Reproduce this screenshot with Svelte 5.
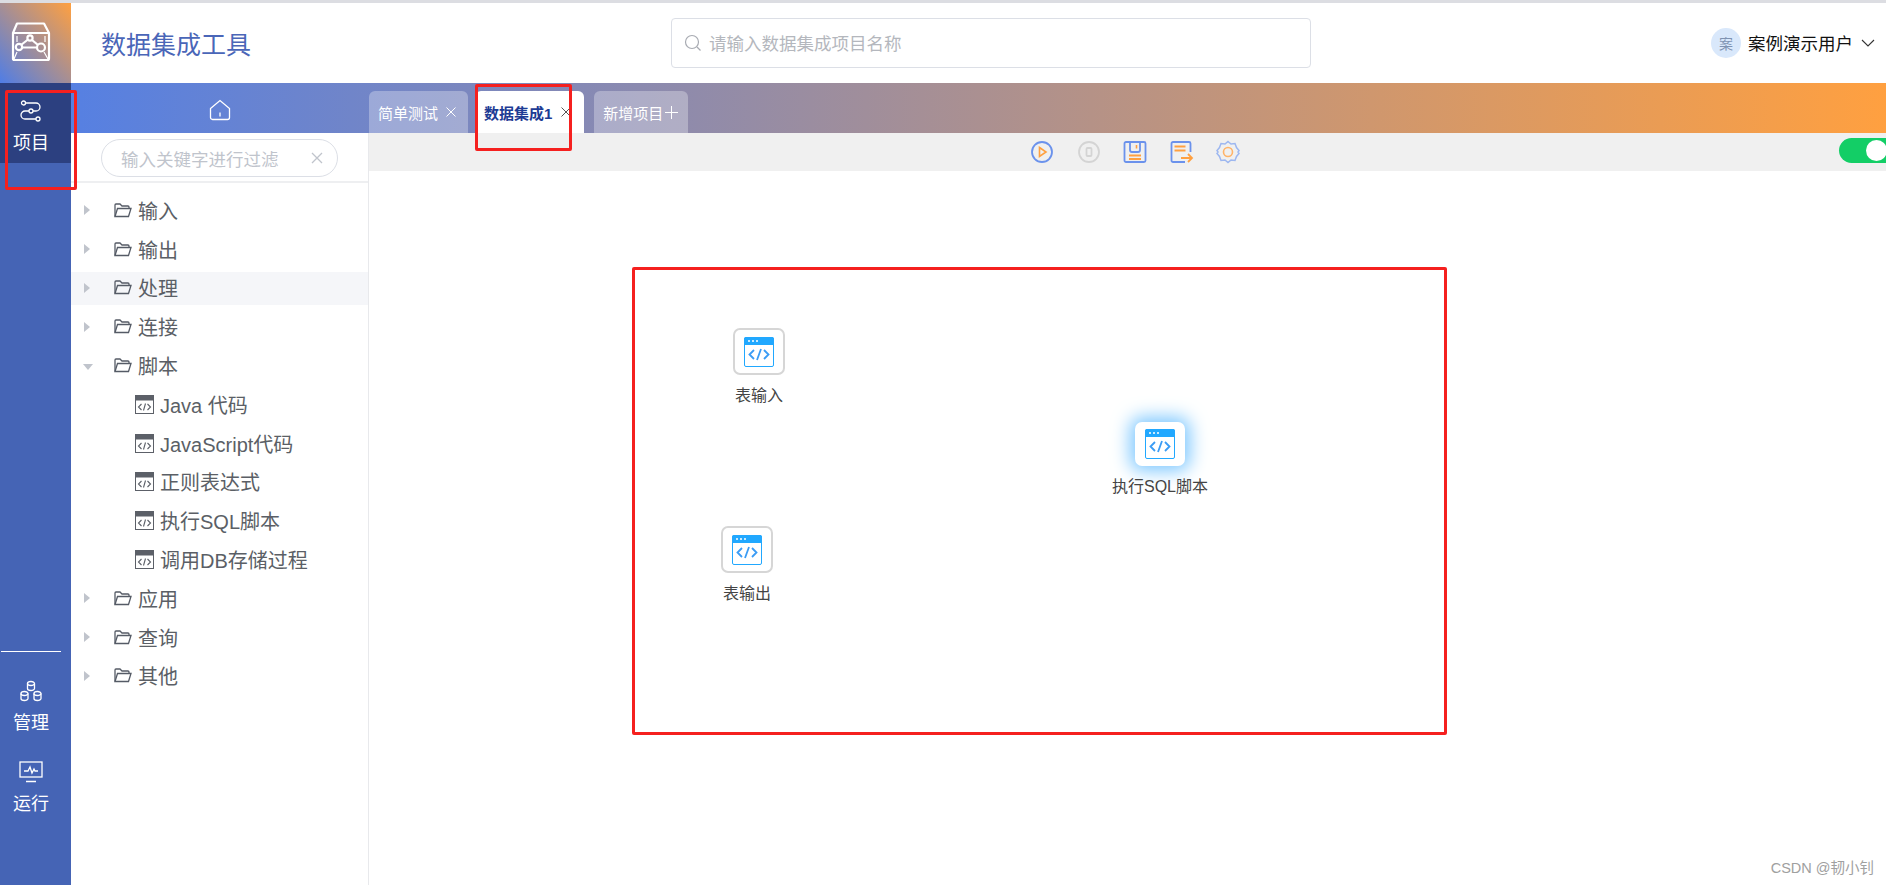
<script>
  const folders = [
    { name: '输入' },
    { name: '输出' },
    { name: '处理', hover: true },
    { name: '连接' },
    { name: '脚本', open: true, children: ['Java 代码', 'JavaScript代码', '正则表达式', '执行SQL脚本', '调用DB存储过程'] },
    { name: '应用' },
    { name: '查询' },
    { name: '其他' }
  ];

  const nodes = [
    { label: '表输入', x: 733, y: 328, w: 52, h: 47 },
    { label: '表输出', x: 721, y: 526, w: 52, h: 47 },
    { label: '执行SQL脚本', x: 1135, y: 422, w: 50, h: 44, active: true }
  ];
</script>

<div class="page">
  <aside class="rail">
    <div class="logo">
      <svg width="40" height="40" viewBox="0 0 40 40" fill="none" stroke="#fff" stroke-width="2.200">
        <path d="M6 1.500h27l5 9.500v25.500a1.500 1.500 0 0 1-1.500 1.500h-33A1.500 1.500 0 0 1 2 36.500V11z" stroke-linejoin="round" />
        <path d="M2 11h36" />
        <path d="M6 14v6M34 14v6M6 30l-3 7M33 30l4 7" stroke-width="1.200" />
        <circle cx="8" cy="25" r="3.200" />
        <circle cx="30" cy="25.500" r="4" />
        <circle cx="19" cy="16" r="2.600" />
        <path d="M10 23l7-5.500M21 18l6 5M11.500 25.500h14" />
      </svg>
    </div>
    <div class="rail-item current">
      <svg width="22" height="22" viewBox="0 0 22 22" fill="none" stroke="#fff" stroke-width="1.300">
        <circle cx="3.500" cy="3" r="2" />
        <circle cx="11" cy="11" r="2" />
        <circle cx="18" cy="19" r="2" />
        <path d="M6 3h10a4 4 0 0 1 0 8h-3M9 11H5a4 4 0 0 0 0 8h11" />
      </svg>
      <span>项目</span>
    </div>
    <div class="rail-bottom">
      <div class="rail-line"></div>
      <div class="rail-item">
        <svg width="24" height="22" viewBox="0 0 24 22" fill="none" stroke="#fff" stroke-width="1.300">
          <path d="M8.500 3.500a3.500 2 0 0 1 7 0v5a3.500 2 0 0 1-7 0z" />
          <path d="M8.500 3.500a3.500 2 0 0 0 7 0" />
          <path d="M2 13.500a3.500 2 0 0 1 7 0v5a3.500 2 0 0 1-7 0z" />
          <path d="M2 13.500a3.500 2 0 0 0 7 0" />
          <path d="M15 13.500a3.500 2 0 0 1 7 0v5a3.500 2 0 0 1-7 0z" />
          <path d="M15 13.500a3.500 2 0 0 0 7 0" />
        </svg>
        <span>管理</span>
      </div>
      <div class="rail-item">
        <svg width="24" height="22" viewBox="0 0 24 22" fill="none" stroke="#fff" stroke-width="1.300">
          <rect x="1" y="1" width="22" height="15" />
          <path d="M5 10h4l2-4 2 6 2-4 1 2h3" />
          <path d="M7 20.500h10" stroke-width="1.500" />
        </svg>
        <span>运行</span>
      </div>
    </div>
  </aside>

  <div class="main">
    <header class="top">
      <h1>数据集成工具</h1>
      <div class="project-search">
        <svg width="18" height="18" viewBox="0 0 18 18" fill="none" stroke="#a8abb2" stroke-width="1.200">
          <circle cx="8" cy="8" r="6.500" />
          <path d="M13 13l3.500 3.500" />
        </svg>
        <span>请输入数据集成项目名称</span>
      </div>
      <div class="user">
        <span class="avatar">案</span>
        <span class="user-name">案例演示用户</span>
        <svg width="14" height="8" viewBox="0 0 14 8" fill="none" stroke="#333" stroke-width="1.100">
          <path d="M1 1l6 6 6-6" />
        </svg>
      </div>
    </header>

    <div class="tabbar">
      <div class="home">
        <svg width="22" height="22" viewBox="0 0 22 22" fill="none" stroke="#fff" stroke-width="1.300">
          <path d="M1.500 9.500L11 1.500l9.500 8v9a2 2 0 0 1-2 2h-15a2 2 0 0 1-2-2z" />
          <path d="M11 13.500v4" />
        </svg>
      </div>
      <div class="tab">
        简单测试
        <svg class="x" width="10" height="10" viewBox="0 0 10 10" stroke="currentColor"><path d="M.5.500l9 9M9.500.500l-9 9" /></svg>
      </div>
      <div class="tab on">
        数据集成1
        <svg class="x" width="10" height="10" viewBox="0 0 10 10" stroke="#555"><path d="M.5.500l9 9M9.500.500l-9 9" /></svg>
      </div>
      <div class="tab add">
        新增项目
        <svg class="plus" width="13" height="13" viewBox="0 0 13 13" stroke="currentColor"><path d="M6.500 0v13M0 6.500h13" /></svg>
      </div>
    </div>

    <div class="body">
      <section class="panel">
        <div class="filter-wrap">
          <div class="filter">
            <span>输入关键字进行过滤</span>
            <svg width="12" height="12" viewBox="0 0 12 12" stroke="#c0c4cc" stroke-width="1.300">
              <path d="M1 1l10 10M11 1L1 11" />
            </svg>
          </div>
        </div>
        <ul class="tree">
          {#each folders as f}
            <li class="row" class:hover={f.hover}>
              <i class="caret" class:down={f.open}></i>
              <svg class="folder" width="18" height="15" viewBox="0 0 18 15" fill="none" stroke="#555b66" stroke-width="1.300">
                <path d="M1 13.500V2a1 1 0 0 1 1-1h4l2 2h6a1 1 0 0 1 1 1v1.500" />
                <path d="M1 13.500l2.500-8h13.500l-2.500 8z" />
              </svg>
              <span>{f.name}</span>
            </li>
            {#if f.children}
              {#each f.children as c}
                <li class="row child">
                  <svg class="script" width="19" height="19" viewBox="0 0 19 19">
                    <rect x="0.500" y="0.500" width="18" height="18" fill="#fff" stroke="#5c6068" />
                    <rect x="0.500" y="0.500" width="18" height="5" fill="#5c6068" />
                    <path d="M6.500 9l-3 3 3 3M12.500 9l3 3-3 3M10.500 8.500l-2 7" fill="none" stroke="#5c6068" stroke-width="1.100" />
                  </svg>
                  <span>{c}</span>
                </li>
              {/each}
            {/if}
          {/each}
        </ul>
      </section>

      <section class="work">
        <div class="toolbar">
          <svg width="24" height="24" viewBox="0 0 24 24" fill="none">
            <circle cx="12" cy="12" r="10" stroke="#6b92ec" stroke-width="1.800" />
            <path d="M9.500 7.500l6.500 4.500-6.500 4.500z" stroke="#ffa040" stroke-width="1.600" />
          </svg>
          <svg width="24" height="24" viewBox="0 0 24 24" fill="none" stroke="#d4d4d4" stroke-width="1.800">
            <circle cx="12" cy="12" r="10" />
            <rect x="9.500" y="8" width="5" height="8" rx="1" />
          </svg>
          <svg width="24" height="24" viewBox="0 0 24 24" fill="none">
            <path d="M3 2h18a1.500 1.500 0 0 1 1.500 1.500v17a1.500 1.500 0 0 1-1.500 1.500H3a1.500 1.500 0 0 1-1.500-1.500v-17A1.500 1.500 0 0 1 3 2z" stroke="#6b92ec" stroke-width="1.800" />
            <path d="M7 2v8a2 2 0 0 0 2 2h6a2 2 0 0 0 2-2V2" stroke="#6b92ec" stroke-width="1.800" />
            <path d="M13.500 5v3.500" stroke="#ffa040" stroke-width="1.600" />
            <path d="M6 15.500h12M6 19h12" stroke="#ffa040" stroke-width="2" />
          </svg>
          <svg width="24" height="24" viewBox="0 0 24 24" fill="none">
            <path d="M15 22H3a1.500 1.500 0 0 1-1.500-1.500v-17A1.500 1.500 0 0 1 3 2h16a1.500 1.500 0 0 1 1.500 1.500V12" stroke="#6b92ec" stroke-width="1.800" />
            <path d="M4.500 6.500h11M4.500 10.500h11" stroke="#ffa040" stroke-width="2" />
            <path d="M11 18h11M18 14l4 4-4 4" stroke="#ffa040" stroke-width="1.800" />
          </svg>
          <svg width="24" height="24" viewBox="0 0 24 24" fill="none">
            <path d="M12 1.500l3 2.500 4-.5 1.500 4 2.500 3-1 1.500 1 1.500-2.500 3-1.500 4-4-.5-3 2.500-3-2.500-4 .5-1.500-4-2.500-3 1-1.500-1-1.500 2.500-3 1.500-4 4 .5z" stroke="#9db7f0" stroke-width="1.500" />
            <circle cx="12" cy="12" r="4.500" stroke="#ffb469" stroke-width="1.600" />
          </svg>
          <span class="switch"><i></i></span>
        </div>
        <div class="canvas"></div>
      </section>
    </div>
  </div>

  {#each nodes as n}
    <div class="node" class:active={n.active} style="left:{n.x + n.w / 2 - 60}px;top:{n.y}px">
      <div class="node-box" style="width:{n.w}px;height:{n.h}px">
        <svg width="30" height="30" viewBox="0 0 30 30">
          <rect x="0.500" y="0.500" width="29" height="29" rx="1.500" fill="#fff" stroke="#21a8ff" />
          <path d="M0 2a2 2 0 0 1 2-2h26a2 2 0 0 1 2 2v6H0z" fill="#21a8ff" />
          <path d="M4 4h2M8 4h2M12 4h2" stroke="#fff" stroke-width="1.500" />
          <path d="M10 13l-4.500 4.500L10 22M20 13l4.500 4.500L20 22M17 12l-4 11" fill="none" stroke="#3a9cf5" stroke-width="1.800" />
        </svg>
      </div>
      <span>{n.label}</span>
    </div>
  {/each}

  <div class="mark" style="left:5px;top:90px;width:66px;height:94px"></div>
  <div class="mark" style="left:475px;top:84px;width:91px;height:61px"></div>
  <div class="mark" style="left:632px;top:267px;width:809px;height:462px"></div>

  <div class="watermark">CSDN @韧小钊</div>
</div>

<style>
  :global(body) {
    margin: 0;
    overflow: hidden;
    font-family: "Liberation Sans", "Noto Sans CJK SC", sans-serif;
  }

  .page {
    position: relative;
    display: flex;
    box-sizing: border-box;
    width: 1886px;
    height: 885px;
    overflow: hidden;
    border-top: 3px solid #dcdde2;
    background: #fff;
  }

  .rail {
    display: flex;
    flex-direction: column;
    flex: none;
    width: 71px;
    background: #4564b5;
    color: #fff;
  }

  .logo {
    display: flex;
    align-items: center;
    justify-content: center;
    box-sizing: border-box;
    height: 80px;
    padding: 0 9px 2px 0;
    background: linear-gradient(to top right, #4f7de6, #ffa040);
  }

  .rail-item {
    display: flex;
    flex-direction: column;
    align-items: center;
    gap: 9px;
    padding-right: 9px;
    font-size: 18px;
    line-height: 24px;
  }

  .rail-item.current {
    height: 80px;
    box-sizing: border-box;
    padding-top: 17px;
    background: #2c4080;
    gap: 9px;
  }

  .rail-bottom {
    margin-top: auto;
    padding-bottom: 69px;
  }

  .rail-line {
    width: 60px;
    height: 1px;
    margin: 0 0 28px 1px;
    background: #fff;
  }

  .rail-bottom .rail-item + .rail-item {
    margin-top: 26px;
  }

  .main {
    display: flex;
    flex-direction: column;
    flex: 1;
    min-width: 0;
  }

  .top {
    display: flex;
    align-items: center;
    flex: none;
    box-sizing: border-box;
    height: 80px;
    padding: 0 0 1px 30px;
  }

  h1 {
    width: 570px;
    margin: 0;
    font-size: 25px;
    font-weight: 400;
    color: #4a66b8;
  }

  .project-search {
    display: flex;
    align-items: center;
    gap: 7px;
    box-sizing: border-box;
    width: 640px;
    height: 50px;
    padding-left: 12px;
    border: 1px solid #dcdfe6;
    border-radius: 4px;
    font-size: 17.500px;
    color: #b4b7bd;
  }

  .user {
    display: flex;
    align-items: center;
    margin-left: 400px;
    font-size: 17.500px;
    color: #111;
  }

  .avatar {
    display: flex;
    align-items: center;
    justify-content: center;
    width: 30px;
    height: 30px;
    margin-right: 7px;
    border-radius: 50%;
    background: #d9e8fb;
    font-size: 14px;
    color: #7f93b2;
  }

  .user-name {
    margin-right: 8px;
  }

  .tabbar {
    display: flex;
    align-items: flex-end;
    flex: none;
    height: 50px;
    background: linear-gradient(to right, #5680e2, #ffa040);
  }

  .home {
    display: flex;
    align-items: center;
    justify-content: center;
    align-self: stretch;
    box-sizing: border-box;
    width: 298px;
    padding-top: 4px;
  }

  .tab {
    display: flex;
    align-items: center;
    box-sizing: border-box;
    height: 42px;
    margin-right: 7px;
    padding: 0 12px 0 9px;
    border-radius: 6px 6px 0 0;
    background: rgba(255, 255, 255, 0.3);
    font-size: 15px;
    color: #fff;
  }

  .tab.on {
    padding-right: 13px;
    margin-right: 10px;
    background: #fff;
    font-weight: 700;
    color: #1d3b94;
  }

  .tab.add {
    padding-right: 10px;
  }

  .x {
    margin-left: 8px;
  }

  .on .x {
    margin-left: 9px;
  }

  .plus {
    margin-left: 2px;
  }

  .body {
    display: flex;
    flex: 1;
    min-height: 0;
  }

  .panel {
    flex: none;
    width: 297px;
    border-right: 1px solid #e8e9ec;
  }

  .filter-wrap {
    box-sizing: border-box;
    height: 50px;
    padding: 6px 30px 0 30px;
    border-bottom: 2px solid #eeeff1;
  }

  .filter {
    display: flex;
    align-items: center;
    justify-content: space-between;
    box-sizing: border-box;
    height: 38px;
    padding: 0 14px 0 19px;
    border: 1px solid #dcdfe6;
    border-radius: 19px;
    font-size: 17.500px;
    color: #c0c4cc;
  }

  .tree {
    margin: 0;
    padding: 8px 0 0;
    list-style: none;
  }

  .row {
    display: flex;
    align-items: center;
    height: 38.800px;
    padding-left: 13px;
    font-size: 20px;
    color: #5b5f66;
  }

  .row.hover {
    background: linear-gradient(#fff 3px, #f5f6f9 3px, #f5f6f9 36px, #fff 36px);
  }

  .row.child {
    padding-left: 64px;
  }

  .caret {
    width: 0;
    height: 0;
    margin-right: 24px;
    border-left: 6px solid #c0c4cc;
    border-top: 5px solid transparent;
    border-bottom: 5px solid transparent;
  }

  .caret.down {
    margin: 2px 21px 0 -1px;
    border-top: 6px solid #c0c4cc;
    border-left: 5px solid transparent;
    border-right: 5px solid transparent;
    border-bottom: 0;
  }

  .folder {
    margin-right: 6px;
  }

  .script {
    margin-right: 6px;
  }

  .work {
    display: flex;
    flex-direction: column;
    flex: 1;
  }

  .toolbar {
    display: flex;
    align-items: center;
    gap: 22.500px;
    height: 38px;
    padding-left: 661px;
    background: #f0f0f0;
    position: relative;
  }

  .switch {
    position: absolute;
    left: 1470px;
    top: 5px;
    width: 60px;
    height: 25px;
    border-radius: 13px;
    background: #13ce66;
  }

  .switch i {
    position: absolute;
    left: 27px;
    top: 2px;
    width: 21px;
    height: 21px;
    border-radius: 50%;
    background: #fff;
  }

  .node {
    position: absolute;
    display: flex;
    flex-direction: column;
    align-items: center;
    gap: 7px;
    width: 120px;
    margin-top: -3px;
    font-size: 16px;
    color: #444;
  }

  .node-box {
    display: flex;
    align-items: center;
    justify-content: center;
    box-sizing: border-box;
    border: 2px solid #d6d6d6;
    border-radius: 7px;
    background: #fff;
  }

  .node.active .node-box {
    border-color: #fff;
    box-shadow: 0 0 18px 5px #7ec8ff;
  }

  .mark {
    position: absolute;
    margin-top: -3px;
    border: 3px solid #f5201f;
    border-radius: 2px;
    pointer-events: none;
  }

  .watermark {
    position: absolute;
    right: 12px;
    bottom: 8px;
    font-size: 14.500px;
    color: #a0a0a0;
  }
</style>
